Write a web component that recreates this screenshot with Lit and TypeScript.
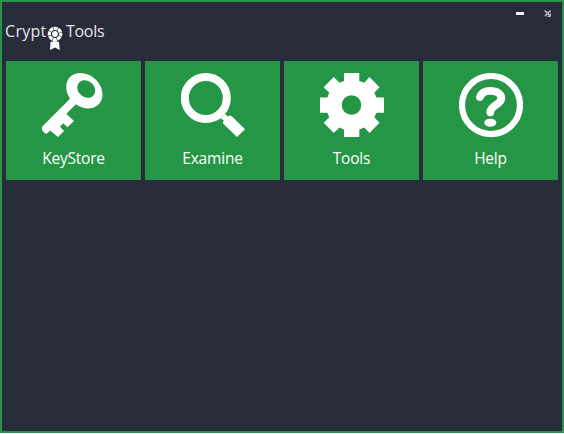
import { LitElement, html, svg, css } from "lit";
import { customElement } from "lit/decorators.js";

const key = svg`
  <path fill-rule="evenodd" d="M24.3 40.7 34 31.3C40 36 50 37.500 56 32C63.500 25 61 13 53 6C45.500-1 34-2 28 4C22.500 9.500 23.500 19 28 25.700L0 53.700V57L3 60.500H5.200L8 57.500 16 64 22 58 18 53.700 21.300 50.300 25.300 54.300 32 48ZM37.500 9.200C41 5.700 46.500 7 50 10.500C53.500 14 54.500 19.500 51 23C47.500 26.300 42 25 38.500 21.600C34.800 18 34 12.700 37.500 9.200Z"/>`;

const lens = svg`
  <circle cx="24.800" cy="25" r="21" fill="none" stroke="#fff" stroke-width="8"/>
  <path d="M39.500 45.500 44 41 47 43.500 48.300 42.500 50.500 43 64 56.300 56 64 42 50.500V48.700L43 47.500Z"/>`;

const gear = svg`
  <path fill-rule="evenodd" d="M24 0H39.300V8L44.300 9.700 49.500 4 59.500 14.300 54.300 19.800 56.500 24.500H64V39.700H56.500L54.300 44.200 59.500 49.700 49.500 60 44.300 54.500 39.300 56.500V64H24V56.500L19.500 54.500 13.700 60 3.700 49.700 9.300 44.200 7.300 39.700H0V24.500H7.300L9.300 19.800 3.700 14.300 13.700 4 19.500 9.700 24 8ZM31.500 22.200A9.800 9.800 0 1 0 31.500 41.800A9.800 9.800 0 1 0 31.500 22.200Z"/>`;

const help = svg`
  <circle cx="32" cy="32" r="29" fill="none" stroke="#fff" stroke-width="6.200"/>
  <path d="M21 24C22.500 19.500 27 17.900 31.300 17.900C38 17.900 42.300 20.800 42.300 25.500C42.300 31.500 31.300 32 31.300 39.300" fill="none" stroke="#fff" stroke-width="7.800" stroke-linecap="round"/>
  <ellipse cx="31.300" cy="49.700" rx="6" ry="4"/>`;

const tiles = [
  { name: "KeyStore", icon: key },
  { name: "Examine", icon: lens },
  { name: "Tools", icon: gear },
  { name: "Help", icon: help },
];

@customElement("app-root")
export class AppRoot extends LitElement {
  static styles = css`
    :host {
      display: block;
      height: 434px;
      background: #fff;
      font-family: "Open Sans", "Noto Sans", sans-serif;
      color: #fff;
    }
    .window {
      box-sizing: border-box;
      height: 433px;
      border: 2px solid #259645;
      background: #282b3a;
      overflow: hidden;
    }
    header {
      display: flex;
      justify-content: space-between;
      height: 59px;
    }
    .brand {
      display: flex;
      margin: 0;
      padding: 17px 0 0 3px;
      font-size: 16px;
      line-height: 24px;
      font-weight: 400;
      color: #e4e4e7;
    }
    .crypt { width: 42px; letter-spacing: 0.3px; }
    .tools { letter-spacing: -0.3px; }
    .medal { width: 16px; height: 24px; margin: 7px 3px 0 0; }
    .controls {
      display: flex;
      gap: 20px;
      padding: 8px 10px 0 0;
    }
    .controls svg { width: 8px; height: 7px; }
    .tiles {
      display: grid;
      grid-template-columns: repeat(4, 135px);
      gap: 4px;
      padding-left: 4px;
    }
    .tile {
      box-sizing: border-box;
      height: 119px;
      padding-top: 12px;
      background: #259645;
      text-align: center;
    }
    .tile svg {
      display: block;
      width: 64px;
      height: 64px;
      margin-left: 36px;
      fill: #fff;
    }
    .label {
      margin-top: 9px;
      font-size: 15.5px;
      line-height: 24px;
      letter-spacing: -0.2px;
    }
  `;

  render() {
    return html`
      <div class="window">
        <header>
          <h1 class="brand">
            <span class="crypt">Crypt</span>
            <svg class="medal" viewBox="0 0 16 24" fill="#fff">
              <path d="M3.500 16 8 15 12 16 12.800 24 8 21.500 3 24Z"/>
              <circle cx="8" cy="8" r="5.700" fill="none" stroke="#fff" stroke-width="3.200" stroke-dasharray="3.900 .577" stroke-dashoffset="1.950"/>
              <circle cx="8" cy="8" r="2.900"/>
            </svg>
            <span class="tools">Tools</span>
          </h1>
          <div class="controls">
            <svg viewBox="0 0 8 7"><path d="M0 2H8V5H0Z" fill="#f1f1f2"/></svg>
            <svg viewBox="0 0 8 7"><path d="M.7.5 6.300 6.100M6.500.5 1 6.100" stroke="#b9bac0" stroke-width="1.600"/><path d="M3.500 6.500H6.500V3.500" fill="none" stroke="#b9bac0"/></svg>
          </div>
        </header>
        <nav class="tiles">
          ${tiles.map(
            (t) => html`<div class="tile">
              <svg viewBox="0 0 64 64">${t.icon}</svg>
              <div class="label">${t.name}</div>
            </div>`
          )}
        </nav>
      </div>
    `;
  }
}
